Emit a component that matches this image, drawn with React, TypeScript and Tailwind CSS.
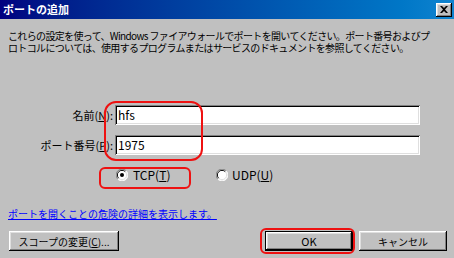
import React from "react";

const raised =
  "shadow-[inset_-1px_-1px_#000,inset_1px_1px_#fff,inset_-2px_-2px_#808080,inset_2px_2px_#dfdfdf]";

function Radio({ checked }: { checked?: boolean }) {
  return (
    <svg width="12" height="12" viewBox="0 0 12 12" className="shrink-0">
      <circle cx="6" cy="6" r="5.5" fill="#fff" />
      <path d="M10.2 1.8 A5.5 5.5 0 0 0 1.8 10.2" fill="none" stroke="#808080" strokeWidth="1" />
      <path d="M9.3 2.7 A4.5 4.5 0 0 0 2.7 9.3" fill="none" stroke="#000" strokeWidth="1" />
      <path d="M1.8 10.2 A5.5 5.5 0 0 0 10.2 1.8" fill="none" stroke="#fff" strokeWidth="1" />
      <path d="M2.7 9.3 A4.5 4.5 0 0 0 9.3 2.7" fill="none" stroke="#dfdfdf" strokeWidth="1" />
      {checked && <circle cx="6" cy="6" r="2" fill="#000" />}
    </svg>
  );
}

export default function App() {
  return (
    <div
      className="relative w-[454px] h-[258px] bg-[#c0c0c0] flex flex-col overflow-hidden text-[10px] text-black"
      style={{ fontFamily: '"Noto Sans CJK JP", "Liberation Sans", sans-serif' }}
    >
      {/* title bar */}
      <div className="h-[19px] flex items-center justify-between pl-[3px] pr-[2px] bg-gradient-to-r from-[#000080] to-[#1084d0]">
        <span className="text-white font-bold text-[11px] leading-[19px]">ポートの追加</span>
        <div className={`w-[16px] h-[14px] bg-[#c0c0c0] flex items-center justify-center ${raised}`}>
          <svg width="8" height="7" viewBox="0 0 8 7">
            <path d="M0 0h2l2 2 2-2h2L5 3.5 8 7H6L4 5 2 7H0l3-3.5z" fill="#000" />
          </svg>
        </div>
      </div>

      {/* description */}
      <div className="mt-[11px] ml-[8px] flex flex-col whitespace-nowrap tracking-[-0.65px]">
        <p className="leading-[12px] h-[12px]">
          これらの設定を使って、Windows ファイアウォールでポートを開いてください。ポート番号およびプ
        </p>
        <p className="leading-[12px] h-[12px]">
          ロトコルについては、使用するプログラムまたはサービスのドキュメントを参照してください。
        </p>
      </div>

      {/* name row */}
      <div className="mt-[51px] flex items-center h-[20px]">
        <div className="w-[113px] text-right leading-[20px] text-[11px]">
          名前(<u>N</u>):
        </div>
        <div className="ml-[2px] w-[305px] h-[20px] bg-white flex items-center pl-[3px] text-[12px] shadow-[inset_1px_1px_#808080,inset_-1px_-1px_#fff,inset_2px_2px_#000,inset_-2px_-2px_#dfdfdf]">
          hfs
        </div>
      </div>

      {/* port row */}
      <div className="mt-[10px] flex items-center h-[20px]">
        <div className="w-[113px] text-right leading-[20px] text-[11px]">
          ポート番号(<u>P</u>):
        </div>
        <div className="ml-[2px] w-[305px] h-[20px] bg-white flex items-center pl-[3px] text-[12px] shadow-[inset_1px_1px_#808080,inset_-1px_-1px_#fff,inset_2px_2px_#000,inset_-2px_-2px_#dfdfdf]">
          1975
        </div>
      </div>

      {/* radios */}
      <div className="mt-[13px] h-[14px] flex items-center pl-[116px]">
        <div className="flex items-center gap-[5px] w-[100px]">
          <Radio checked />
          <span className="text-[12px] leading-[14px]">
            TCP(<u>T</u>)
          </span>
        </div>
        <div className="flex items-center gap-[4px]">
          <Radio />
          <span className="text-[12px] leading-[14px]">
            UDP(<u>U</u>)
          </span>
        </div>
      </div>

      {/* link */}
      <div className="mt-[26px] ml-[8px] h-[12px] leading-[12px] text-[#0000ff] underline">
        ポートを開くことの危険の詳細を表示します。
      </div>

      {/* buttons */}
      <div className="mt-[11px] flex items-center h-[20px]">
        <div className={`ml-[9px] w-[110px] h-[20px] flex items-center justify-center ${raised}`}>
          スコープの変更(<u>C</u>)...
        </div>
        <div className="ml-[146px] w-[88px] h-[20px] flex items-center justify-center text-[11px] shadow-[inset_0_0_0_1px_#000,inset_-2px_-2px_#000,inset_2px_2px_#fff,inset_-3px_-3px_#808080,inset_3px_3px_#dfdfdf]">
          OK
        </div>
        <div className={`ml-[6px] w-[88px] h-[20px] flex items-center justify-center ${raised}`}>
          キャンセル
        </div>
      </div>

      {/* red annotation marks */}
      <div className="absolute left-[104px] top-[101px] w-[99px] h-[60px] rounded-[12px] border-2 border-[#ee1111]" />
      <div className="absolute left-[99px] top-[167px] w-[92px] h-[22px] rounded-[6px] border-2 border-[#ee1111]" />
      <div className="absolute left-[260px] top-[228px] w-[95px] h-[26px] rounded-[6px] border-2 border-[#ee1111]" />
    </div>
  );
}
